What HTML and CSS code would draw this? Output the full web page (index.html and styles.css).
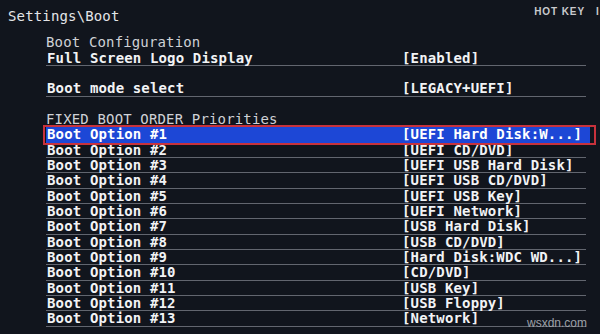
FILE: index.html
```html
<!DOCTYPE html>
<html>
<head>
<meta charset="utf-8">
<link rel="stylesheet" href="styles.css">
</head>
<body>
<div class="screen">
  <header class="top">
    <div class="path">Settings\Boot</div>
    <div class="hotkey">HOT KEY<span class="cut">I</span></div>
  </header>
  <div class="list">
    <div class="row head">Boot Configuration</div>
    <div class="row item"><span class="label">Full Screen Logo Display</span><span class="value">[Enabled]</span></div>
    <div class="row blank"></div>
    <div class="row item"><span class="label">Boot mode select</span><span class="value">[LEGACY+UEFI]</span></div>
    <div class="row blank"></div>
    <div class="row head">FIXED BOOT ORDER Priorities</div>
    <div class="row item selected"><span class="label">Boot Option #1</span><span class="value">[UEFI Hard Disk:W...]</span></div>
    <div class="row item"><span class="label">Boot Option #2</span><span class="value">[UEFI CD/DVD]</span></div>
    <div class="row item"><span class="label">Boot Option #3</span><span class="value">[UEFI USB Hard Disk]</span></div>
    <div class="row item"><span class="label">Boot Option #4</span><span class="value">[UEFI USB CD/DVD]</span></div>
    <div class="row item"><span class="label">Boot Option #5</span><span class="value">[UEFI USB Key]</span></div>
    <div class="row item"><span class="label">Boot Option #6</span><span class="value">[UEFI Network]</span></div>
    <div class="row item"><span class="label">Boot Option #7</span><span class="value">[USB Hard Disk]</span></div>
    <div class="row item"><span class="label">Boot Option #8</span><span class="value">[USB CD/DVD]</span></div>
    <div class="row item"><span class="label">Boot Option #9</span><span class="value">[Hard Disk:WDC WD...]</span></div>
    <div class="row item"><span class="label">Boot Option #10</span><span class="value">[CD/DVD]</span></div>
    <div class="row item"><span class="label">Boot Option #11</span><span class="value">[USB Key]</span></div>
    <div class="row item"><span class="label">Boot Option #12</span><span class="value">[USB Floppy]</span></div>
    <div class="row item"><span class="label">Boot Option #13</span><span class="value">[Network]</span></div>
  </div>
  <div class="watermark">wsxdn.com</div>
</div>
</body>
</html>
```

FILE: styles.css
```css
html, body {
  margin: 0;
  padding: 0;
  background: #11151d;
}

.screen {
  position: relative;
  width: 600px;
  height: 334px;
  overflow: hidden;
  background: #11151d;
  font-family: "DejaVu Sans Mono", "Liberation Mono", monospace;
  font-size: 14px;
  letter-spacing: 0.15px;
  color: #f2f3f5;
}

.top {
  display: flex;
  justify-content: space-between;
  align-items: flex-start;
  height: 35.33px;
  padding: 0 0 0 8px;
  box-sizing: border-box;
}

.path {
  padding-top: 8.5px;
  line-height: 15.33px;
  color: #e4e5e8;
}

.hotkey {
  padding-top: 6px;
  line-height: 12px;
  font-family: "Liberation Sans", Arial, sans-serif;
  font-weight: bold;
  font-size: 10px;
  letter-spacing: 0.9px;
  color: #c9cacd;
  display: flex;
  gap: 11px;
  margin-right: -1px;
}

.cut {
  width: 5px;
  overflow: hidden;
}

.list {
  display: flex;
  flex-direction: column;
  padding-left: 46px;
}

.row {
  width: 540px;
  height: 15.33px;
  line-height: 15.33px;
  box-sizing: border-box;
  display: flex;
  white-space: pre;
}

.head {
  color: #cfd1d6;
}

.item {
  font-weight: bold;
  border-bottom: 1px solid #62666f;
  padding-left: 1px;
}

.label {
  width: 355px;
  flex: none;
}

.value {
  flex: none;
}

.selected {
  position: relative;
  width: 544px;
  background: #1d47d6;
  border-bottom: none;
  color: #ffffff;
}

.selected::after {
  content: "";
  position: absolute;
  left: -3px;
  top: -2px;
  right: -6px;
  bottom: -2px;
  border: 2px solid #c8323c;
}

.watermark {
  position: absolute;
  left: 527px;
  top: 316px;
  font-family: "Liberation Sans", Arial, sans-serif;
  font-size: 12px;
  letter-spacing: 0;
  color: #9ea1a8;
}
```
